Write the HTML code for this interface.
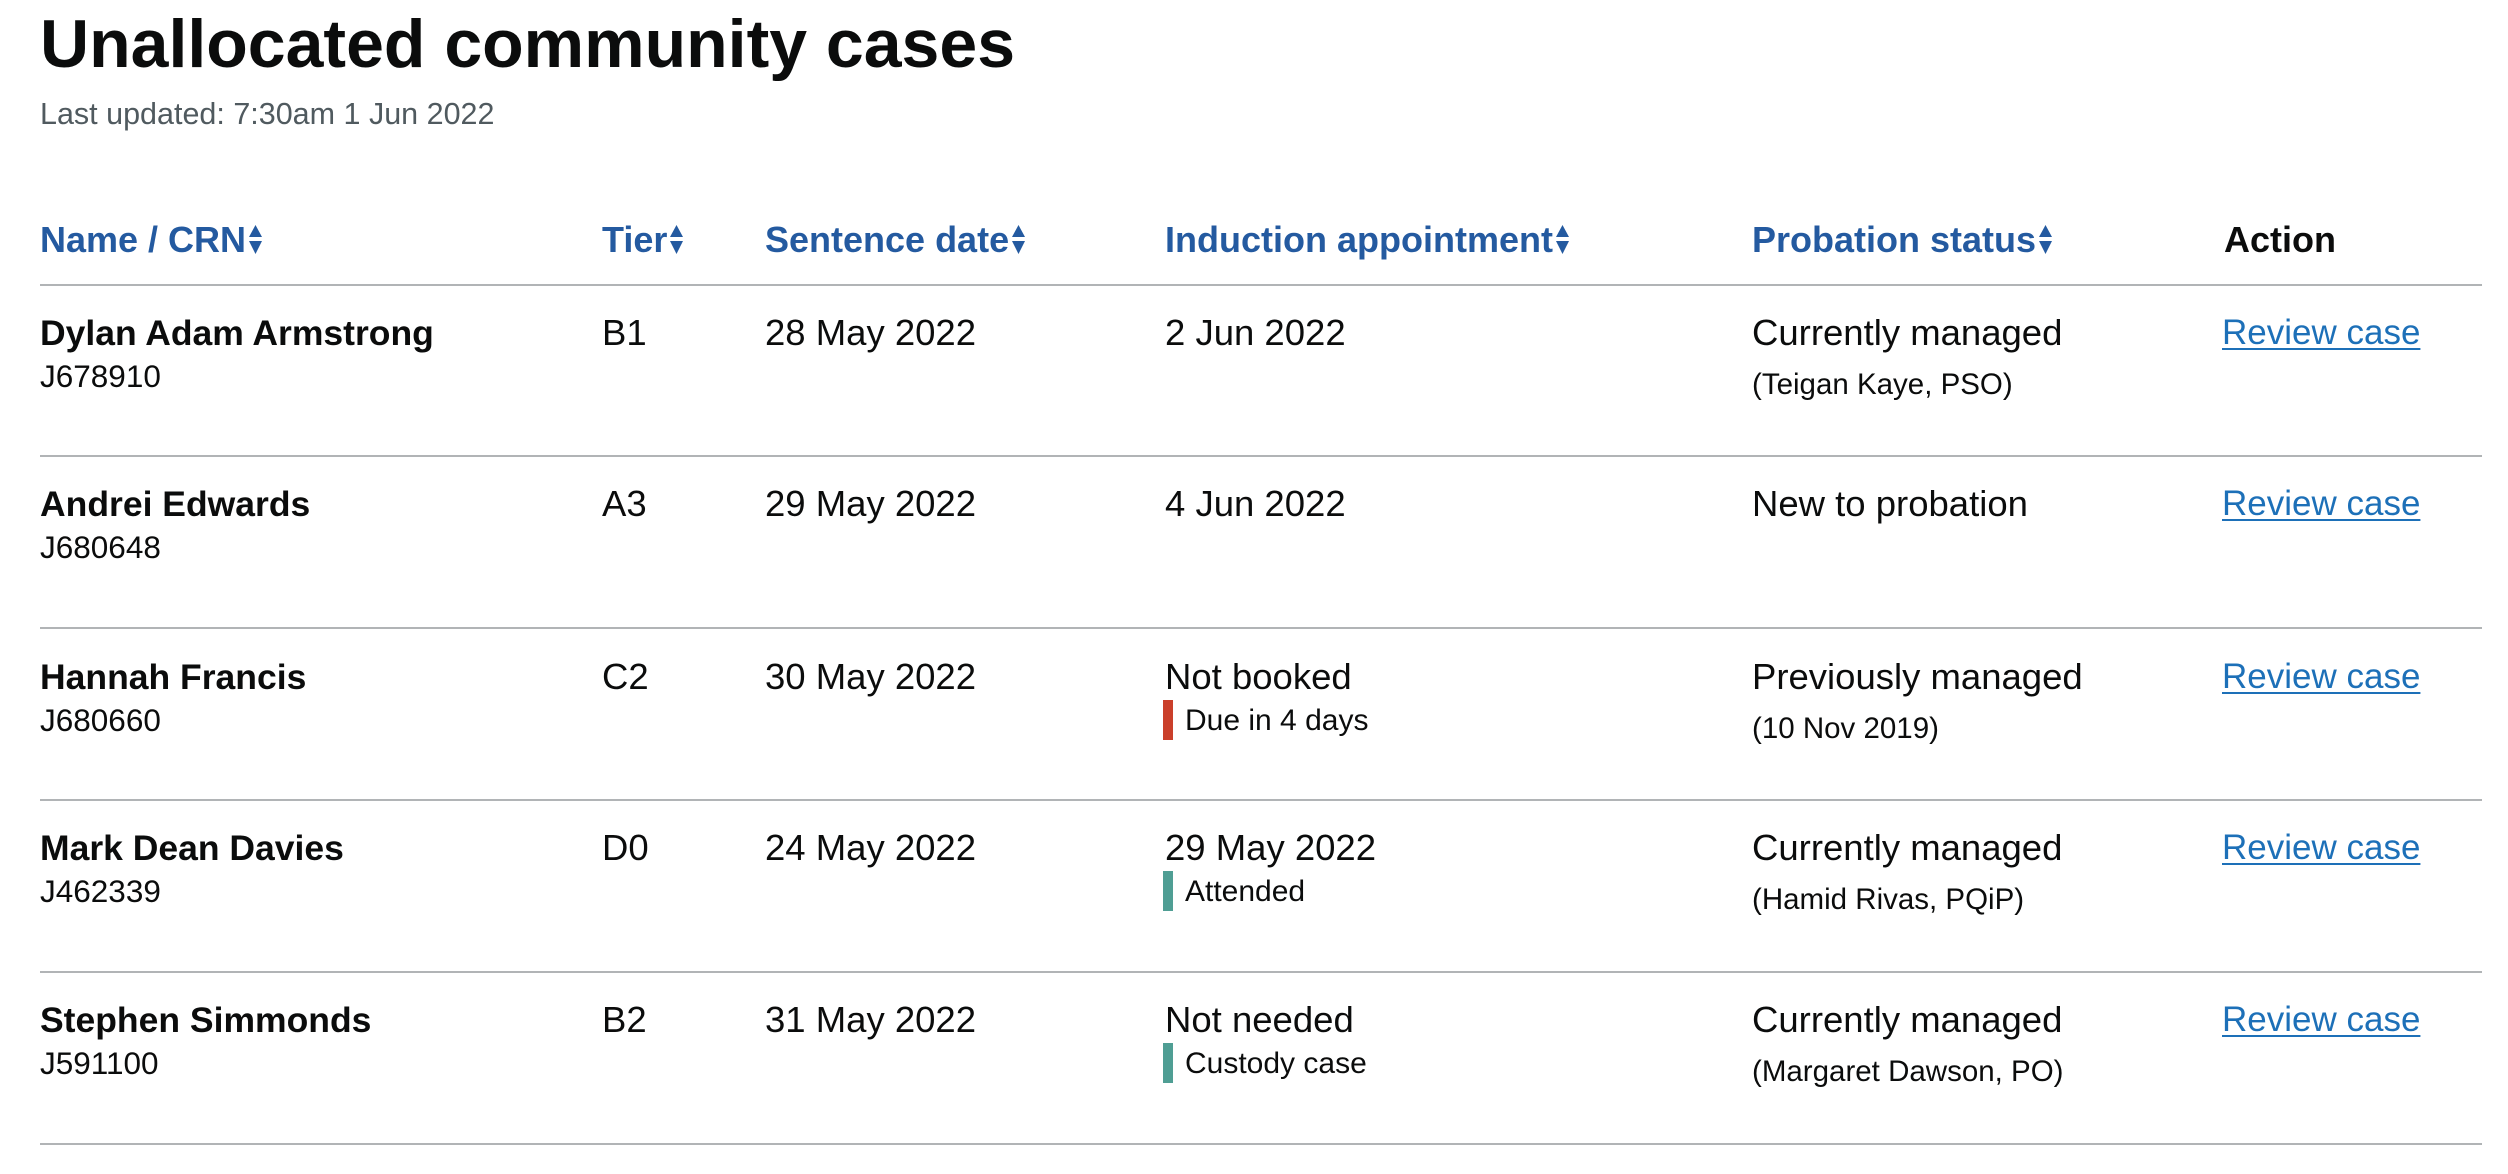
<!DOCTYPE html>
<html><head><meta charset="utf-8"><style>
*{margin:0;padding:0;box-sizing:border-box}
body{width:2508px;height:1174px;background:#fff;position:relative;overflow:hidden;font-family:"Liberation Sans",Arial,sans-serif;color:#0b0c0c}
.a{position:absolute;line-height:1;white-space:nowrap}
h1{position:absolute;left:40px;top:10px;font-size:68px;line-height:1;font-weight:bold;letter-spacing:0}
.sub{left:40px;top:99px;font-size:30.5px;color:#505a5f}
.th{top:222px;font-size:36px;font-weight:bold;color:#245aa0}
.th svg{display:inline-block;margin-left:3px;vertical-align:-2px}
.line{position:absolute;left:40px;width:2442px;height:2px;background:#b1b4b6}
.row{position:absolute;left:0;width:2508px;height:171px}
.m{top:30px;font-size:36.5px}
.b{font-weight:bold;font-size:35.5px;top:31px}
.crn{top:76px;font-size:31.5px;left:40px}
.s2{top:85px;font-size:29.5px;left:1752px}
.tag{top:77px;font-size:30px;left:1185px}
.bar{position:absolute;left:1163px;top:71px;width:10px;height:40px}
.lnk{left:2222px;top:30px;font-size:35px;color:#1d70b8;text-decoration:underline;text-decoration-thickness:2px;text-underline-offset:4px}
</style></head><body>
<h1>Unallocated community cases</h1>
<div class="a sub">Last updated: 7:30am 1 Jun 2022</div>

<div class="a th" style="left:40px">Name / CRN<svg width="13" height="29" viewBox="0 0 13 29"><path d="M6.5 0 13 12H0z M0 16h13L6.5 29z" fill="#245aa0"/></svg></div>
<div class="a th" style="left:602px">Tier<svg width="13" height="29" viewBox="0 0 13 29"><path d="M6.5 0 13 12H0z M0 16h13L6.5 29z" fill="#245aa0"/></svg></div>
<div class="a th" style="left:765px">Sentence date<svg width="13" height="29" viewBox="0 0 13 29"><path d="M6.5 0 13 12H0z M0 16h13L6.5 29z" fill="#245aa0"/></svg></div>
<div class="a th" style="left:1165px">Induction appointment<svg width="13" height="29" viewBox="0 0 13 29"><path d="M6.5 0 13 12H0z M0 16h13L6.5 29z" fill="#245aa0"/></svg></div>
<div class="a th" style="left:1752px">Probation status<svg width="13" height="29" viewBox="0 0 13 29"><path d="M6.5 0 13 12H0z M0 16h13L6.5 29z" fill="#245aa0"/></svg></div>
<div class="a th" style="left:2224px;color:#0b0c0c">Action</div>

<div class="line" style="top:284px"></div>
<div class="line" style="top:455px"></div>
<div class="line" style="top:627px"></div>
<div class="line" style="top:799px"></div>
<div class="line" style="top:971px"></div>
<div class="line" style="top:1143px"></div>

<div class="row" style="top:285px">
<div class="a m b" style="left:40px">Dylan Adam Armstrong</div>
<div class="a crn">J678910</div>
<div class="a m" style="left:602px">B1</div>
<div class="a m" style="left:765px">28 May 2022</div>
<div class="a m" style="left:1165px">2 Jun 2022</div>
<div class="a m" style="left:1752px">Currently managed</div>
<div class="a s2">(Teigan Kaye, PSO)</div>
<div class="a m lnk">Review case</div>
</div>

<div class="row" style="top:456px">
<div class="a m b" style="left:40px">Andrei Edwards</div>
<div class="a crn">J680648</div>
<div class="a m" style="left:602px">A3</div>
<div class="a m" style="left:765px">29 May 2022</div>
<div class="a m" style="left:1165px">4 Jun 2022</div>
<div class="a m" style="left:1752px">New to probation</div>
<div class="a m lnk">Review case</div>
</div>

<div class="row" style="top:629px">
<div class="a m b" style="left:40px">Hannah Francis</div>
<div class="a crn">J680660</div>
<div class="a m" style="left:602px">C2</div>
<div class="a m" style="left:765px">30 May 2022</div>
<div class="a m" style="left:1165px">Not booked</div>
<div class="bar" style="background:#ca3f2a"></div>
<div class="a tag">Due in 4 days</div>
<div class="a m" style="left:1752px">Previously managed</div>
<div class="a s2">(10 Nov 2019)</div>
<div class="a m lnk">Review case</div>
</div>

<div class="row" style="top:800px">
<div class="a m b" style="left:40px">Mark Dean Davies</div>
<div class="a crn">J462339</div>
<div class="a m" style="left:602px">D0</div>
<div class="a m" style="left:765px">24 May 2022</div>
<div class="a m" style="left:1165px">29 May 2022</div>
<div class="bar" style="background:#4f9e94"></div>
<div class="a tag">Attended</div>
<div class="a m" style="left:1752px">Currently managed</div>
<div class="a s2">(Hamid Rivas, PQiP)</div>
<div class="a m lnk">Review case</div>
</div>

<div class="row" style="top:972px">
<div class="a m b" style="left:40px">Stephen Simmonds</div>
<div class="a crn">J591100</div>
<div class="a m" style="left:602px">B2</div>
<div class="a m" style="left:765px">31 May 2022</div>
<div class="a m" style="left:1165px">Not needed</div>
<div class="bar" style="background:#4f9e94"></div>
<div class="a tag">Custody case</div>
<div class="a m" style="left:1752px">Currently managed</div>
<div class="a s2">(Margaret Dawson, PO)</div>
<div class="a m lnk">Review case</div>
</div>
</body></html>
